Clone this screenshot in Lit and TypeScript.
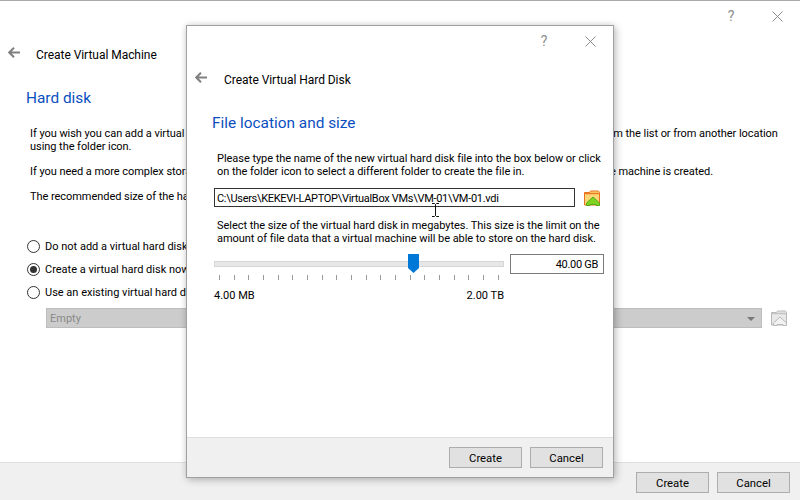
import { LitElement, html, css, svg } from "lit";
import { customElement } from "lit/decorators.js";

const back = svg`<svg class="back" width="12" height="11" viewBox="0 0 12 11"><path d="M6 .7 1.200 5.500 6 10.300M2 5.500h10" fill="none" stroke="#808080" stroke-width="2"/></svg>`;
const folder = (dim: boolean) => html`<svg class="folder" width="16" height="16" viewBox="0 0 16 16">
  <path d="M.5 2.500h5l1-1.500h8l1 1.500v12.500H.5z" fill="${dim ? "#e8e8e8" : "#fbd778"}" stroke="${dim ? "#b8b8b8" : "#e8701f"}"/>
  <path d="M1 3.500h14" stroke="${dim ? "#c4c4c4" : "#ee7a22"}" stroke-width="1.500"/>
  <path d="M9 7 15.500 13v2.500h-3.500v-1H6v1H2.500V13z" fill="${dim ? "#f2f2f2" : "#7ed321"}" stroke="${dim ? "#b8b8b8" : "#58a816"}"/>
</svg>`;

@customElement("app-root")
export class AppRoot extends LitElement {
  static styles = css`
    :host { display: block; width: 800px; height: 500px; position: relative; overflow: hidden; background: #fff;
      font: 11px/13px Roboto, "Liberation Sans", sans-serif; color: #000; }
    * { box-sizing: border-box; }
    .win { display: flex; flex-direction: column; height: 100%; }
    .main { flex: 1; border-top: 1px solid #a9a9a9; display: flex; flex-direction: column; }
    .chrome { display: flex; justify-content: flex-end; align-items: center; color: #8c8c8c; font-size: 14px; }
    .chrome .q { width: 14px; text-align: center; }
    .chrome svg { display: block; }
    .m-chrome { height: 30px; padding-right: 17px; gap: 34px; }
    .head { display: flex; align-items: center; font-size: 12px; line-height: 16px; letter-spacing: -.04px; }
    .back { display: block; margin-bottom: 5px; }
    .m-head { margin-top: 16px; padding-left: 8px; gap: 16px; }
    h2 { margin: 0; font-weight: 400; color: #0a4fc0; font-size: 15.4px; line-height: 20px; }
    .m-h { margin: 25px 0 0 26px; }
    .body { padding-left: 30px; margin-top: 19px; white-space: nowrap; letter-spacing: -.05px; }
    .body p { margin: 0 0 12px; }
    .radios { margin: 24px 0 0 27px; display: flex; flex-direction: column; gap: 9px; }
    .radio { display: flex; align-items: center; gap: 5px; height: 14px; }
    .dot { width: 13px; height: 13px; border-radius: 50%; border: 1px solid #333; display: grid; place-items: center; flex: none; }
    .dot i { width: 7px; height: 7px; border-radius: 50%; background: #333; }
    .combo-row { margin: 9px 0 0 46px; display: flex; align-items: center; gap: 9px; }
    .combo { width: 716px; height: 20px; background: #cccccc; border: 1px solid #bdbdbd; color: #8a8a8a; padding: 1px 6px 0 3px; display: flex; align-items: center; justify-content: space-between; }
    .caret { width: 0; height: 0; border: 4px solid transparent; border-top: 4px solid #777; border-bottom: 0; }
    .foot { display: flex; justify-content: flex-end; gap: 8px; background: #f0f0f0; border-top: 1px solid #dfdfdf; }
    .m-foot { height: 38px; padding: 9px 10px 0 0; }
    button { font: inherit; font-size: 11.3px; width: 73px; height: 21px; background: #e1e1e1; border: 1px solid #adadad; padding: 1px 0 0; color: #000; }

    .dlg { position: absolute; left: 186px; top: 25px; width: 428px; height: 453px; background: #fff; border: 1px solid #a0a0a0;
      box-shadow: 2px 2px 8px rgba(0,0,0,.22), 0 0 6px rgba(0,0,0,.1); display: flex; flex-direction: column; }
    .d-main { flex: 1; display: flex; flex-direction: column; }
    .d-chrome { height: 30px; padding-right: 17px; gap: 34px; }
    .d-head { margin-top: 16px; padding-left: 8px; gap: 17px; }
    .d-h { margin: 25px 0 0 25px; }
    .d-body { padding: 0 0 0 30px; margin-top: 19px; }
    .d-body p { margin: 0; white-space: nowrap; letter-spacing: -.04px; }
    .path-row { margin: 10px 0 0 -3px; display: flex; align-items: center; gap: 9px; }
    .path { width: 361px; height: 19px; border: 1px solid #333; padding: 1px 0 0 2px; display: flex; align-items: center; white-space: nowrap; letter-spacing: -.3px; }
    .d-body p.sel { margin-top: 12px; }
    .size-row { margin: 9px 0 0 -3px; display: flex; gap: 6px; }
    .slider { width: 290px; }
    .rail { height: 20px; position: relative; }
    .rail::before { content: ""; position: absolute; left: 0; right: 0; top: 7px; height: 4px; background: #e7e7e7; border: 1px solid #d6d6d6; }
    .thumb { position: absolute; left: 194px; top: 0; }
    .ticks { display: flex; justify-content: space-between; height: 5px; margin-top: 1px; padding: 0 5px; }
    .ticks i { width: 1px; background: #9a9a9a; }
    .lims { display: flex; justify-content: space-between; margin-top: 9px; }
    .spin { width: 94px; height: 20px; border: 1px solid #7a7a7a; display: flex; align-items: center; justify-content: flex-end; padding: 1px 5px 0 0; letter-spacing: -.3px; }
    .d-foot { height: 40px; padding: 9px 10px 0 0; }
    .beam { position: absolute; left: 431px; top: 203px; }
  `;

  render() {
    return html`
      <div class="win">
        <div class="main">
          <div class="chrome m-chrome"><span class="q">?</span>
            <svg width="11" height="11" viewBox="0 0 11 11"><path d="M.5.500l10 10M10.500.500l-10 10" stroke="#8c8c8c"/></svg></div>
          <div class="head m-head">${back}<span>Create Virtual Machine</span></div>
          <h2 class="m-h">Hard disk</h2>
          <div class="body">
            <p>If you wish you can add a virtual hard disk to the new machine. You can either create a new hard disk file or select one from the list or from another location<br>using the folder icon.</p>
            <p>If you need a more complex storage set-up you can skip this step and make the changes to the machine settings once the machine is created.</p>
            <p>The recommended size of the hard disk is 40.00 GB.</p>
          </div>
          <div class="radios">
            <label class="radio"><span class="dot"></span>Do not add a virtual hard disk</label>
            <label class="radio"><span class="dot"><i></i></span>Create a virtual hard disk now</label>
            <label class="radio"><span class="dot"></span>Use an existing virtual hard disk file</label>
          </div>
          <div class="combo-row"><div class="combo"><span>Empty</span><span class="caret"></span></div>${folder(true)}</div>
        </div>
        <div class="foot m-foot"><button>Create</button><button>Cancel</button></div>
      </div>

      <div class="dlg">
        <div class="d-main">
          <div class="chrome d-chrome"><span class="q">?</span>
            <svg width="11" height="11" viewBox="0 0 11 11"><path d="M.5.500l10 10M10.500.500l-10 10" stroke="#8c8c8c"/></svg></div>
          <div class="head d-head">${back}<span>Create Virtual Hard Disk</span></div>
          <h2 class="d-h">File location and size</h2>
          <div class="d-body">
            <p>Please type the name of the new virtual hard disk file into the box below or click<br>on the folder icon to select a different folder to create the file in.</p>
            <div class="path-row"><div class="path">C:\\Users\\KEKEVI-LAPTOP\\VirtualBox VMs\\VM-01\\VM-01.vdi</div>${folder(false)}</div>
            <p class="sel">Select the size of the virtual hard disk in megabytes. This size is the limit on the<br>amount of file data that a virtual machine will be able to store on the hard disk.</p>
            <div class="size-row">
              <div class="slider">
                <div class="rail">
                  <svg class="thumb" width="11" height="19" viewBox="0 0 11 19"><path d="M0 0h11v14l-5.500 5L0 14z" fill="#0078d7"/></svg>
                </div>
                <div class="ticks">${Array.from({ length: 20 }, () => html`<i></i>`)}</div>
                <div class="lims"><span>4.00 MB</span><span>2.00 TB</span></div>
              </div>
              <div class="spin">40.00 GB</div>
            </div>
          </div>
        </div>
        <div class="foot d-foot"><button>Create</button><button>Cancel</button></div>
      </div>
      <svg class="beam" width="9" height="14" viewBox="0 0 9 14"><path d="M1 .500h2.500l1 1 1-1H8M4.500 1.500v11M1 13.500h2.500l1-1 1 1H8" fill="none" stroke="#111"/></svg>
    `;
  }
}
